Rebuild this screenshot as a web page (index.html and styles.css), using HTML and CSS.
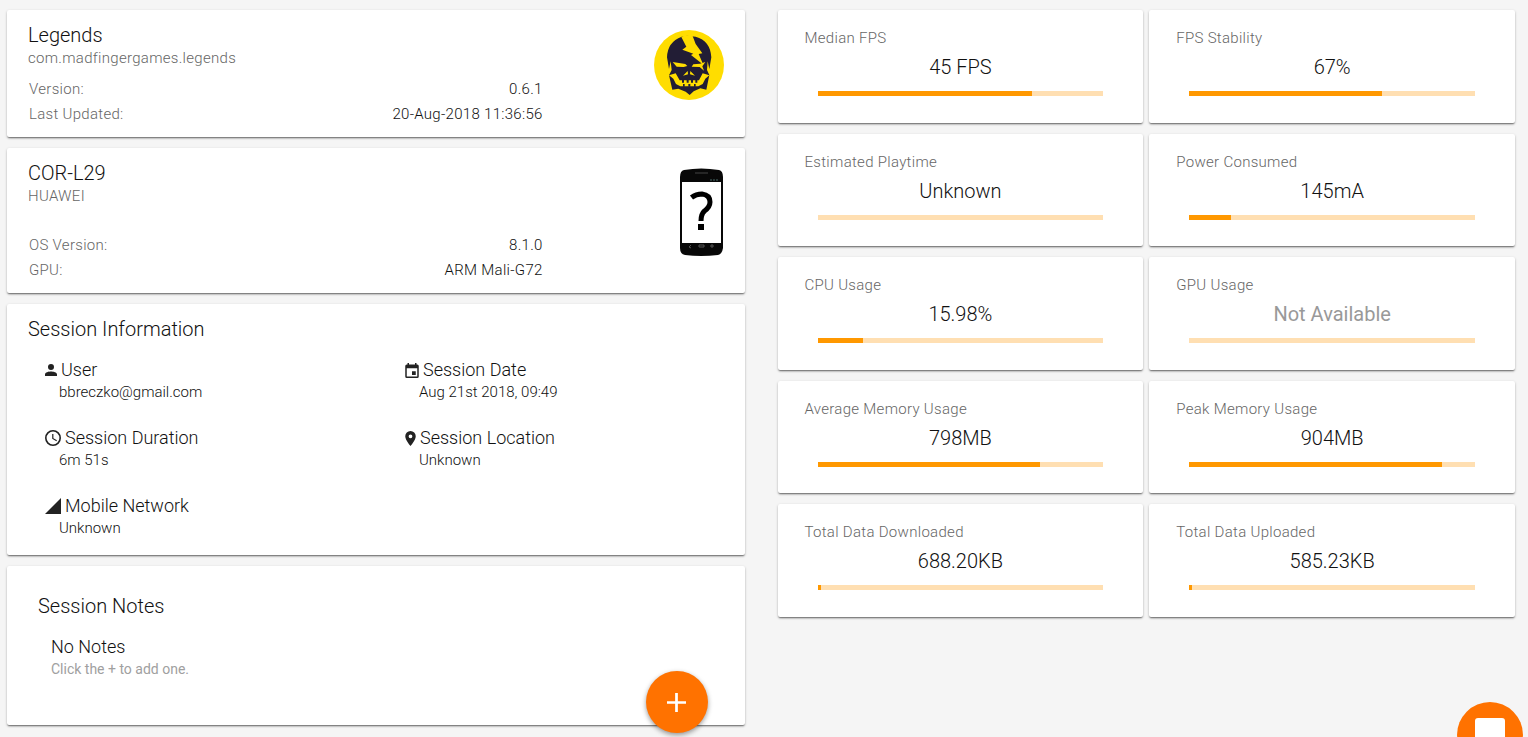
FILE: index.html
```
<!DOCTYPE html>
<html lang="en">
<head>
<meta charset="utf-8">
<meta name="viewport" content="width=device-width, initial-scale=1">
<title>Legends - Session</title>
<link rel="stylesheet" href="styles.css">
</head>
<body>
<main class="page">
  <div class="column">
    <section class="card summary">
      <div class="summary-text">
        <h2>Legends</h2>
        <p class="sub">com.madfingergames.legends</p>
        <dl class="facts">
          <dt>Version:</dt><dd>0.6.1</dd>
          <dt>Last Updated:</dt><dd>20-Aug-2018 11:36:56</dd>
        </dl>
      </div>
      <svg class="app-icon" viewBox="39 30 210 210" role="img" aria-label="Legends">
        <circle cx="144" cy="135" r="105" fill="#fd0"/>
        <path d="M84 147 78 112Q79 66 122 50L138 47 164 50Q208 62 211 112L205 147 200 124 198 150 205 165 196 209 178 205 158 214 146 225 134 215 112 206 94 209 84 166 92 150 89 124Z" fill="#221d35"/>
        <g fill="#fd0">
          <path d="M121 51 132 46 154 46 164 72 184 100 173 102 187 134 150 105 157 101 124 89 136 80Z"/>
          <path d="M95 126 133 132 139 138 128 141 107 140Z"/>
          <path d="M193 126 184 139 189 152 176 141 152 140 157 133 177 131Z"/>
          <path d="M140 153 141 163 126 167ZM148 153 162 167 147 163Z"/>
          <path d="M84 166 104 160 116 181 174 181 185 160 205 166 193 176 185 192 172 199 118 199 105 192 97 176Z"/>
        </g>
        <path d="M123 180h6v8h-6ZM137 180h6v8h-6ZM150 180h6v8h-6ZM163 180h6v8h-6ZM126 192h5v8h-5ZM142 192h6v8h-6ZM159 192h5v8h-5Z" fill="#221d35"/>
      </svg>
    </section>

    <section class="card summary device">
      <div class="summary-text">
        <h2>COR-L29</h2>
        <p class="sub">HUAWEI</p>
        <dl class="facts">
          <dt>OS Version:</dt><dd>8.1.0</dd>
          <dt>GPU:</dt><dd>ARM Mali-G72</dd>
        </dl>
      </div>
      <svg class="phone-icon" viewBox="0 0 45 88" role="img" aria-label="Unknown device">
        <path d="M5 2Q22-1 40 2 44 3 44 9V80Q43 86 39 87 22 89 6 87 1 86 1 80V9Q1 3 5 2Z" fill="#080808"/>
        <path d="M16 5h13" stroke="#444"/>
        <path d="M3 14h39v61H3Z" fill="#fff"/>
        <path d="M31 12h9" stroke="#476664" stroke-dasharray="2 1"/>
        <path d="m12 77-2 2 2 1M20 77h5v2h-5ZM32 77h2v2h-2Z" fill="none" stroke="#555"/>
        <path d="M12.500 29.500Q17 26 23 26 31 27 31 34 31 39 25.500 43 22 46 22 53" fill="none" stroke="#000" stroke-width="5"/>
        <path d="M19 56h6v6h-6Z"/>
      </svg>
    </section>

    <section class="card session">
      <h2>Session Information</h2>
      <div class="info-grid">
        <div class="info">
          <h3><svg class="icon-user" viewBox="4 4 16 16"><path d="M12 12a4 4 0 1 0 0-8 4 4 0 0 0 0 8Zm0 2c-3 0-8 1-8 4v2h16v-2c0-3-5-4-8-4Z"/></svg>User</h3>
          <p>bbreczko@gmail.com</p>
        </div>
        <div class="info">
          <h3><svg class="icon-date" viewBox="3 1 18 20"><path d="M17 12h-5v5h5v-5ZM16 1v2H8V1H6v2H5a2 2 0 0 0-2 2v14a2 2 0 0 0 2 2h14a2 2 0 0 0 2-2V5a2 2 0 0 0-2-2h-1V1h-2Zm3 18H5V8h14v11Z"/></svg>Session Date</h3>
          <p>Aug 21st 2018, 09:49</p>
        </div>
        <div class="info">
          <h3><svg class="icon-time" viewBox="2 2 20 20"><path d="M12 2a10 10 0 1 0 0 20 10 10 0 0 0 0-20Zm0 18a8 8 0 1 1 0-16 8 8 0 0 1 0 16Zm.5-13H11v6l5.200 3.200.8-1.300-4.500-2.700V7Z"/></svg>Session Duration</h3>
          <p>6m 51s</p>
        </div>
        <div class="info">
          <h3><svg class="icon-place" viewBox="5 2 14 20"><path d="M12 2a7 7 0 0 0-7 7c0 5.250 7 13 7 13s7-7.750 7-13a7 7 0 0 0-7-7Zm0 9.500a2.500 2.500 0 1 1 0-5 2.500 2.500 0 0 1 0 5Z"/></svg>Session Location</h3>
          <p>Unknown</p>
        </div>
        <div class="info">
          <h3><svg class="icon-network" viewBox="2 2 20 20"><path d="M2 22h20V2Z"/></svg>Mobile Network</h3>
          <p>Unknown</p>
        </div>
      </div>
    </section>

    <section class="card notes">
      <h2>Session Notes</h2>
      <div class="note">
        <h3>No Notes</h3>
        <p>Click the + to add one.</p>
      </div>
      <button class="add" type="button" aria-label="Add note">
        <svg viewBox="5 5 14 14"><path d="M19 13h-6v6h-2v-6H5v-2h6V5h2v6h6v2Z"/></svg>
      </button>
    </section>
  </div>

  <div class="metrics">
    <section class="card metric">
      <h4>Median FPS</h4>
      <p>45 FPS</p>
      <div class="bar"><div class="fill" style="width:75%"></div></div>
    </section>
    <section class="card metric">
      <h4>FPS Stability</h4>
      <p>67%</p>
      <div class="bar"><div class="fill" style="width:67.500%"></div></div>
    </section>
    <section class="card metric">
      <h4>Estimated Playtime</h4>
      <p>Unknown</p>
      <div class="bar"></div>
    </section>
    <section class="card metric">
      <h4>Power Consumed</h4>
      <p>145mA</p>
      <div class="bar"><div class="fill" style="width:14.500%"></div></div>
    </section>
    <section class="card metric">
      <h4>CPU Usage</h4>
      <p>15.98%</p>
      <div class="bar"><div class="fill" style="width:15.980%"></div></div>
    </section>
    <section class="card metric">
      <h4>GPU Usage</h4>
      <p class="na">Not Available</p>
      <div class="bar"></div>
    </section>
    <section class="card metric">
      <h4>Average Memory Usage</h4>
      <p>798MB</p>
      <div class="bar"><div class="fill" style="width:78%"></div></div>
    </section>
    <section class="card metric">
      <h4>Peak Memory Usage</h4>
      <p>904MB</p>
      <div class="bar"><div class="fill" style="width:88.300%"></div></div>
    </section>
    <section class="card metric">
      <h4>Total Data Downloaded</h4>
      <p>688.20KB</p>
      <div class="bar"><div class="fill" style="width:1.300%"></div></div>
    </section>
    <section class="card metric">
      <h4>Total Data Uploaded</h4>
      <p>585.23KB</p>
      <div class="bar"><div class="fill" style="width:1.100%"></div></div>
    </section>
  </div>
</main>
<button class="chat" type="button" aria-label="Open chat"><span></span></button>
</body>
</html>
```
FILE: styles.css
```
* {
  box-sizing: border-box;
}
body {
  margin: 0;
  background: #f5f5f5;
  color: #111;
  font-family: Roboto, "Liberation Sans", sans-serif;
  font-weight: 300;
}
h2, h3, h4, p, dl, dd {
  margin: 0;
  font-weight: 300;
}
svg {
  flex: none;
}
.page {
  display: grid;
  grid-template-columns: 1fr 1fr;
  gap: 33px;
  align-items: start;
  padding: 10px 13px 12px 7px;
}
.column {
  display: grid;
  gap: 11px;
}
.card {
  background: #fff;
  border-radius: 2px;
  box-shadow: 0 1px 3px rgba(0,0,0,.2), 0 1px 1px rgba(0,0,0,.14), 0 2px 2px -1px rgba(0,0,0,.4);
}
h2 {
  font-size: 20px;
  line-height: 24px;
}

/* app and device */
.summary {
  display: flex;
  justify-content: space-between;
  padding: 13px 21px 10px;
}
.summary-text {
  width: 74%;
}
.sub {
  color: #666;
  font-size: 15px;
  line-height: 22px;
  letter-spacing: .02em;
}
.facts {
  display: grid;
  grid-template-columns: auto auto;
  justify-content: space-between;
  margin-top: 8px;
  padding-left: 1px;
  font-size: 15px;
  line-height: 25px;
  letter-spacing: .02em;
}
.facts dt {
  color: #666;
}
.facts dd {
  text-align: right;
}
.app-icon {
  width: 70px;
  height: 70px;
  margin-top: 7px;
}
.device .facts {
  margin-top: 26px;
}
.phone-icon {
  width: 45px;
  height: 88px;
  margin-top: 7px;
}

/* session */
.session {
  padding: 13px 21px 17px;
}
.info-grid {
  display: grid;
  grid-template-columns: 360px 1fr;
  row-gap: 24px;
  margin-top: 17px;
  padding-left: 17px;
}
h3 {
  display: flex;
  align-items: center;
  gap: 4px;
  font-size: 18px;
  line-height: 24px;
}
h3 svg {
  fill: #222;
}
.info p {
  padding-left: 14px;
  font-size: 15px;
  line-height: 20px;
}
.icon-user {
  width: 12px;
  height: 12px;
}
.icon-date {
  width: 14px;
  height: 15px;
}
.icon-time, .icon-network {
  width: 16px;
  height: 16px;
}
.icon-place {
  width: 11px;
  height: 15px;
}

/* notes */
.notes {
  position: relative;
  padding: 28px 31px 46px;
}
.note {
  margin-top: 17px;
  padding-left: 13px;
}
.note p {
  color: #a0a0a0;
  font-size: 14px;
  font-weight: 400;
  line-height: 20px;
}
.add {
  position: absolute;
  right: 37px;
  bottom: -8px;
  display: flex;
  align-items: center;
  justify-content: center;
  width: 62px;
  height: 62px;
  padding: 0;
  border: 0;
  border-radius: 50%;
  background: #ff7200;
  box-shadow: 0 2px 5px rgba(0,0,0,.4);
  cursor: pointer;
}
.add svg {
  width: 19px;
  height: 19px;
  fill: #fff;
}

/* metrics */
.metrics {
  display: grid;
  grid-template-columns: 1fr 1fr;
  grid-auto-rows: 1fr;
  gap: 11px 6px;
  min-height: 607px;
}
.metric {
  padding: 18px 27px 26px;
}
.metric h4 {
  color: #666;
  font-size: 15px;
  line-height: 20px;
  letter-spacing: .02em;
}
.metric p {
  margin-top: 7px;
  font-size: 20px;
  line-height: 24px;
  text-align: center;
}
.metric .na {
  color: #999;
  font-weight: 400;
}
.bar {
  height: 5px;
  margin: 12px 13px 0;
  background: #ffdfb2;
}
.fill {
  height: 100%;
  background: #ff9800;
}

.chat {
  position: fixed;
  right: 5px;
  bottom: -31px;
  width: 66px;
  height: 66px;
  padding: 0;
  border: 0;
  border-radius: 50%;
  background: #ff7200;
  cursor: pointer;
}
.chat span {
  display: block;
  width: 30px;
  height: 34px;
  margin: 0 auto;
  border-radius: 3px;
  background: #fff;
}
```
